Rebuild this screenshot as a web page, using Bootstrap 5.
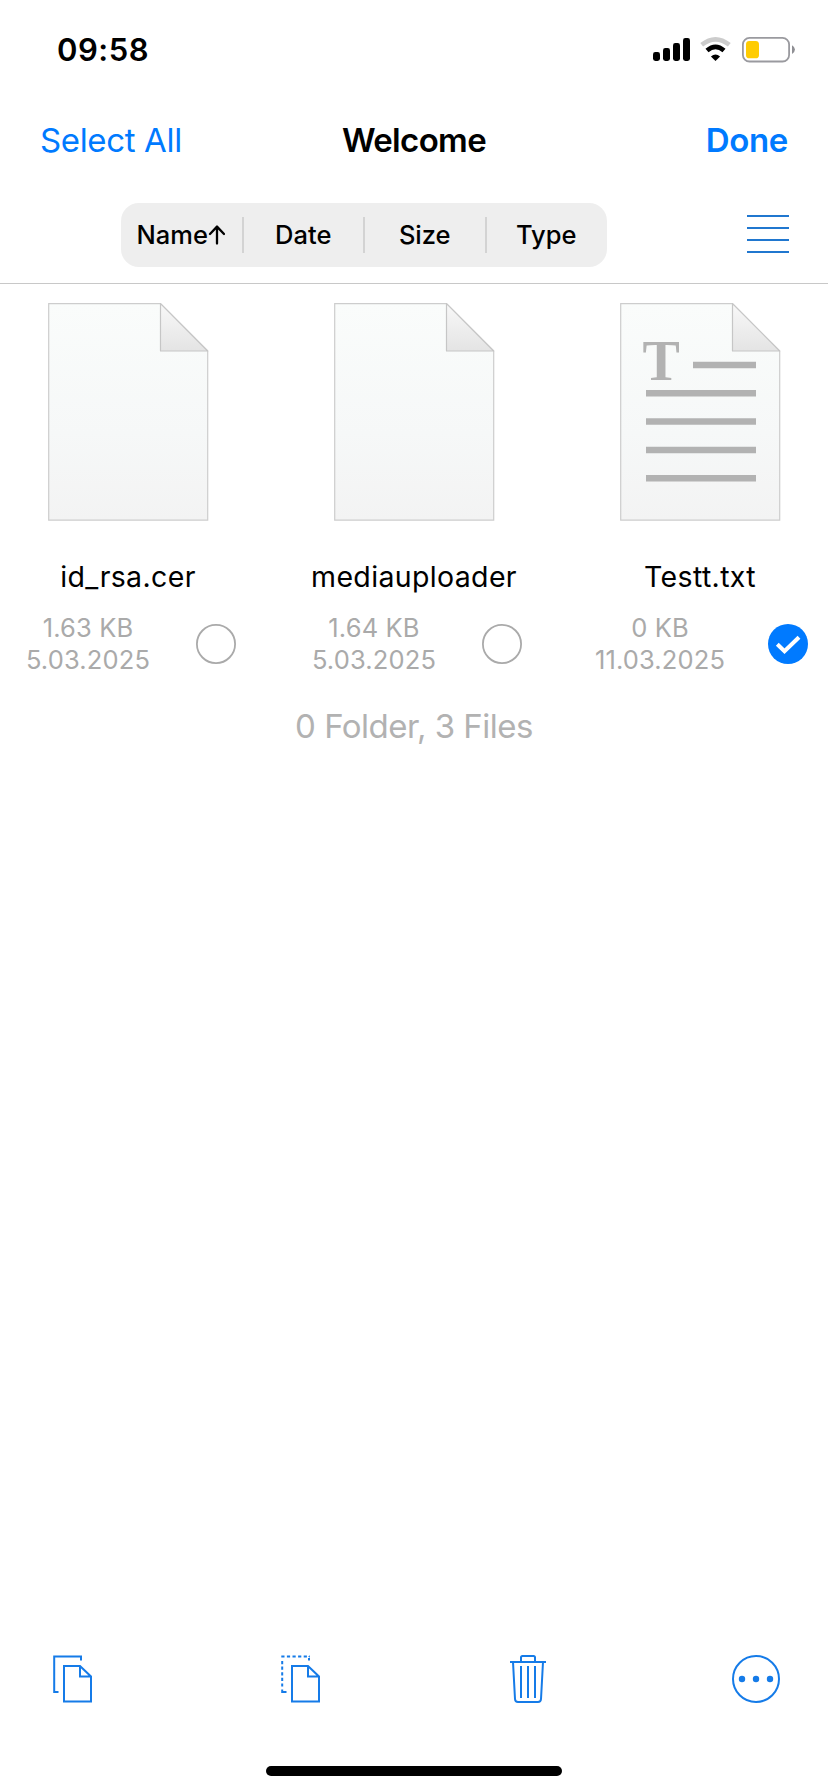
<!DOCTYPE html>
<html lang="en">
<head>
<meta charset="utf-8">
<meta name="viewport" content="width=device-width, initial-scale=1">
<title>Welcome</title>
<link href="https://cdn.jsdelivr.net/npm/bootstrap@5.3.0/dist/css/bootstrap.min.css" rel="stylesheet">
<script src="https://cdn.jsdelivr.net/npm/bootstrap@5.3.0/dist/js/bootstrap.bundle.min.js" defer></script>
<style>
  body { font-family: Inter, "Liberation Sans", sans-serif; color: #000; background: #fff; }
  svg { display: block; flex: none; }
  .screen { width: 828px; height: 1792px; overflow: hidden; }
  .status { height: 88px; padding: 12px 34px 0 57px; }
  .clock { font-size: 31px; font-weight: 600; letter-spacing: .5px; padding-top: 1px; }
  .titlebar { height: 104px; padding: 2px 40px 0; font-size: 33px; }
  .titlebar a { color: #007aff; letter-spacing: -.35px; }
  .titlebar .heading { letter-spacing: -.65px; }
  .sortbar { height: 92px; padding: 11px 39px 0 121px; border-bottom: 1px solid #c8c8c8; }
  .segments { width: 486px; height: 64px; border-radius: 18px; background: #eee; }
  .segments .btn { flex: none; width: 25%; font-size: 25.5px; font-weight: 500; color: #000; border: 0; padding: 0; }
  .segments .btn:first-child { padding-right: 2px; }
  .sep { width: 2px; height: 36px; background: #d3d3d3; margin: 0 -1px; }
  .files { gap: 30px; padding-top: 19px; }
  .file { width: 256px; }
  .fname { font-size: 28.5px; line-height: 40px; margin-top: 36px; letter-spacing: .35px; }
  .info { margin-top: 15px; }
  .meta { width: 176px; font-size: 25.5px; line-height: 32px; letter-spacing: .15px; color: #aaa; }
  .pick { margin-left: 20px; }
  .total { font-size: 33px; line-height: 44px; letter-spacing: -.5px; color: #b2b2b2; margin-top: 28px; }
  .tools { padding: 0 48px; margin-bottom: 63px; }
  .tools .btn { border: 0; padding: 0; }
  .home { width: 296px; height: 10px; margin-bottom: 16px; }
</style>
</head>
<body>
<svg width="0" height="0" class="position-absolute" aria-hidden="true">
  <defs>
    <linearGradient id="paper" x1="0" y1="0" x2="0" y2="1"><stop offset="0" stop-color="#fafcfb"/><stop offset=".6" stop-color="#f6f8f8"/><stop offset="1" stop-color="#f3f3f3"/></linearGradient>
    <linearGradient id="fold" x1="0" y1="0" x2="0" y2="1"><stop offset="0" stop-color="#f8f8f8"/><stop offset="1" stop-color="#e4e4e4"/></linearGradient>
    <symbol id="doc" viewBox="0 0 161 218">
      <path d="M.7.7H112.5L159.7 48V217.2H.7Z" fill="url(#paper)" stroke="#cdcdcd" stroke-width="1.2"/>
      <path d="M112.5.7V48H159.7Z" fill="url(#fold)" stroke="#c6c6c6" stroke-width="1.2" stroke-linejoin="round"/>
    </symbol>
  </defs>
</svg>
<div class="screen d-flex flex-column">
  <header>
    <div class="status d-flex align-items-center justify-content-between">
      <span class="clock">09:58</span>
      <svg width="144" height="30" viewBox="0 0 144 30" overflow="visible">
        <rect x="3" y="17" width="7" height="9" rx="2.4"/><rect x="13" y="13" width="7" height="13" rx="2.4"/><rect x="23" y="8" width="7" height="18" rx="2.4"/><rect x="33" y="3" width="7" height="23" rx="2.4"/>
        <path d="M51.7 9.8Q65.5 -1.2 79.3 9.8" fill="none" stroke="#ccc" stroke-width="4.6"/>
        <path d="M57 15.6Q65.5 8.2 74 15.6" fill="none" stroke="#000" stroke-width="4.6"/>
        <path d="M65.5 26 60.9 21.4Q65.5 17.4 70.1 21.4Z"/>
        <rect x="92.9" y="2.9" width="46.2" height="23.6" rx="6.6" fill="none" stroke="#9a9a9f" stroke-width="1.8"/>
        <rect x="96" y="6" width="13" height="17.3" rx="3.4" fill="#ffcc02"/>
        <path d="M142 10.2Q145 12 145 14.6T142 19Z" fill="#8f8f94"/>
      </svg>
    </div>
    <nav class="titlebar d-flex align-items-center">
      <a class="flex-fill w-25 text-decoration-none" role="button">Select All</a>
      <span class="heading flex-fill w-25 text-center fw-semibold">Welcome</span>
      <a class="flex-fill w-25 text-end text-decoration-none fw-semibold" role="button">Done</a>
    </nav>
    <div class="sortbar d-flex justify-content-between">
      <div class="segments d-flex align-items-center">
        <button class="btn d-flex align-items-center justify-content-center">Name<svg width="17" height="20" viewBox="0 0 17 20" fill="none" stroke="#000" stroke-width="2.3" stroke-linecap="round" stroke-linejoin="round"><path d="M9 18.6V1.6M2 9 9 1.6 16 9"/></svg></button>
        <div class="sep"></div>
        <button class="btn">Date</button>
        <div class="sep"></div>
        <button class="btn">Size</button>
        <div class="sep"></div>
        <button class="btn">Type</button>
      </div>
      <svg width="42" height="64" viewBox="0 0 42 64" fill="#2077cf"><path d="M0 12h42v2H0zM0 24h42v2H0zM0 36h42v2H0zM0 48h42v2H0z"/></svg>
    </div>
  </header>

  <main class="text-center">
    <div class="files d-flex">
      <div class="file">
        <svg class="mx-auto" width="161" height="218"><use href="#doc"/></svg>
        <div class="fname">id_rsa.cer</div>
        <div class="info d-flex align-items-center">
          <div class="meta">1.63 KB<br>5.03.2025</div>
          <svg class="pick" width="40" height="40" viewBox="0 0 40 40"><circle cx="20" cy="20" r="19.1" fill="none" stroke="#aaa" stroke-width="1.8"/></svg>
        </div>
      </div>
      <div class="file">
        <svg class="mx-auto" width="161" height="218"><use href="#doc"/></svg>
        <div class="fname">mediauploader</div>
        <div class="info d-flex align-items-center">
          <div class="meta">1.64 KB<br>5.03.2025</div>
          <svg class="pick" width="40" height="40" viewBox="0 0 40 40"><circle cx="20" cy="20" r="19.1" fill="none" stroke="#aaa" stroke-width="1.8"/></svg>
        </div>
      </div>
      <div class="file">
        <svg class="mx-auto" width="161" height="218" viewBox="0 0 161 218">
          <use href="#doc"/>
          <text x="41.3" y="77" text-anchor="middle" font-family="Liberation Serif, serif" font-weight="700" font-size="56" fill="#b2b2b2">T</text>
          <path d="M73 58.7h63v6.5H73zM26 87h110v6.5H26zM26 115.3h110v6.5H26zM26 143.7h110v6.5H26zM26 172h110v6.5H26z" fill="#b2b2b2"/>
        </svg>
        <div class="fname">Testt.txt</div>
        <div class="info d-flex align-items-center">
          <div class="meta">0 KB<br>11.03.2025</div>
          <svg class="pick" width="40" height="40" viewBox="0 0 40 40"><circle cx="20" cy="20" r="20" fill="#007aff"/><path d="M9.3 20.3 16.5 27.3 31 13.2" fill="none" stroke="#fff" stroke-width="4"/></svg>
        </div>
      </div>
    </div>
    <div class="total">0 Folder, 3 Files</div>
  </main>

  <footer class="mt-auto">
    <div class="tools d-flex justify-content-between">
      <button class="btn" aria-label="Copy"><svg width="48" height="48" viewBox="0 0 48 48" fill="none" stroke="#157be8" stroke-width="2">
        <path d="M33 5.5V1.5H6.2V37H10.5M16 11H32L43 21.5V46.5H16ZM32 11V21.5H43"/></svg></button>
      <button class="btn" aria-label="Cut"><svg width="48" height="48" viewBox="0 0 48 48" fill="none" stroke="#157be8" stroke-width="2">
        <path d="M33 5.5V1.5" stroke-dasharray="2.6 1"/><path d="M5.3 1.5H34" stroke-dasharray="3.2 2.4"/><path d="M6.2 6V34" stroke-dasharray="3.2 2.4"/><path d="M6.2 34.5V37H10.5"/><path d="M16 11H32L43 21.5V46.5H16ZM32 11V21.5H43"/></svg></button>
      <button class="btn" aria-label="Delete"><svg width="48" height="48" viewBox="0 0 48 48" fill="none" stroke="#157be8" stroke-width="2">
        <path d="M6 7H42M17 7V2.5Q17 1 18.5 1H29.5Q31 1 31 2.5V7M9 7 11 44Q11.2 47 14 47H34Q36.8 47 37 44L39 7M17 11V43M24 11V43M31 11V43"/></svg></button>
      <button class="btn" aria-label="More"><svg width="48" height="48" viewBox="0 0 48 48"><circle cx="24" cy="24" r="23" fill="none" stroke="#157be8" stroke-width="2"/><g fill="#157be8"><circle cx="10" cy="24" r="3.2"/><circle cx="24" cy="24" r="3.2"/><circle cx="38" cy="24" r="3.2"/></g></svg></button>
    </div>
    <div class="home mx-auto rounded-pill bg-black"></div>
  </footer>
</div>
</body>
</html>
